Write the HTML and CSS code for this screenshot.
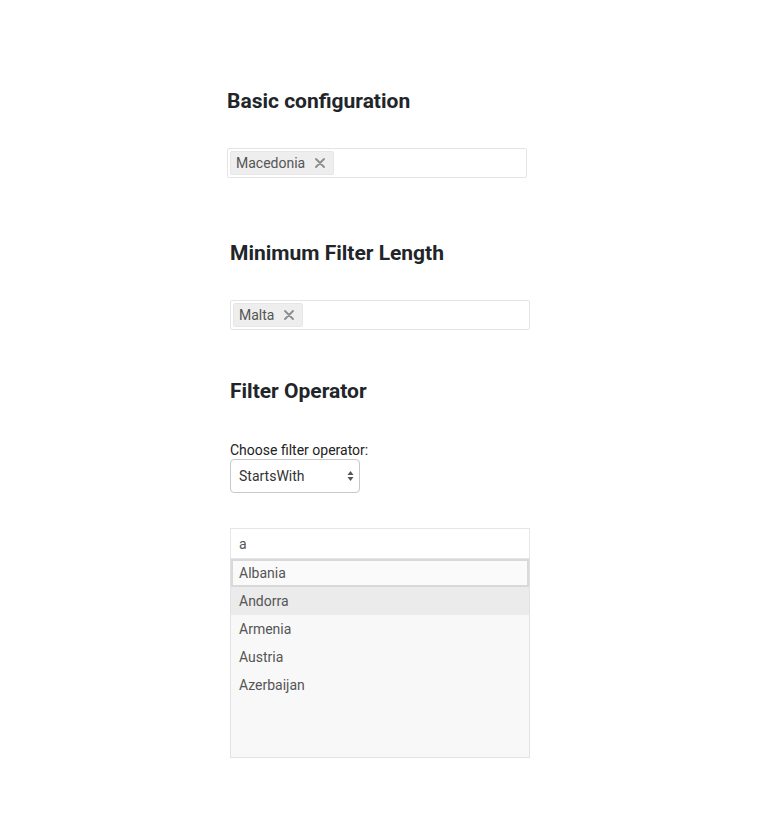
FILE: index.html
```html
<!DOCTYPE html>
<html>
<head>
<meta charset="utf-8">
<link rel="stylesheet" href="styles.css">
</head>
<body>
<div class="page">
  <section class="demo demo-first">
    <h2 class="title">Basic configuration</h2>
    <div class="multi">
      <span class="tag">Macedonia <svg class="tag-x" width="10" height="10" viewBox="0 0 10 10"><path d="M1 1 L9 9 M9 1 L1 9" stroke="#8c8c8c" stroke-width="1.8" stroke-linecap="round"/></svg></span>
    </div>
  </section>

  <section class="demo demo-second">
    <h2 class="title">Minimum Filter Length</h2>
    <div class="multi">
      <span class="tag">Malta <svg class="tag-x" width="10" height="10" viewBox="0 0 10 10"><path d="M1 1 L9 9 M9 1 L1 9" stroke="#8c8c8c" stroke-width="1.8" stroke-linecap="round"/></svg></span>
    </div>
  </section>

  <section class="demo demo-third">
    <h2 class="title">Filter Operator</h2>
    <label class="label">Choose filter operator:</label>
    <div class="select">
      <span>StartsWith</span>
      <svg class="select-arrows" width="7" height="12" viewBox="0 0 7 12"><path d="M3.5 1 L6.5 5 L0.5 5 Z M3.5 11 L6.5 7 L0.5 7 Z" fill="#555"/></svg>
    </div>
    <div class="combo">
      <div class="search">a</div>
      <ul class="list">
        <li class="item item-focus">Albania</li>
        <li class="item item-hover">Andorra</li>
        <li class="item">Armenia</li>
        <li class="item">Austria</li>
        <li class="item">Azerbaijan</li>
      </ul>
    </div>
  </section>
</div>
</body>
</html>
```

FILE: styles.css
```css
* { box-sizing: border-box; }
html, body { margin: 0; padding: 0; background: #fff; }
body {
  font-family: Roboto, "Liberation Sans", sans-serif;
  color: #212529;
}
.page {
  padding-top: 88px;
  padding-left: 230px;
  width: 770px;
}
.demo { width: 300px; }
.demo-first { margin-left: -3px; }
.demo-second { margin-top: 62px; }
.demo-third { margin-top: 48px; }
.title {
  margin: 0;
  padding-top: 1px;
  font-size: 21px;
  line-height: 25px;
  font-weight: 700;
  color: #212529;
}
.multi {
  margin-top: 34px;
  height: 30px;
  border: 1px solid #e4e4e4;
  border-radius: 2px;
  padding: 2px;
  display: flex;
  align-items: flex-start;
}
.tag {
  display: inline-flex;
  align-items: center;
  height: 24px;
  padding: 0 8px 0 5px;
  background: #eeeeee;
  border: 1px solid #e6e6e6;
  border-radius: 2px;
  font-size: 14px;
  color: #555;
  gap: 10px;
}
.tag-x { display: block; }
.label {
  display: block;
  margin-top: 38px;
  font-size: 14px;
  line-height: 16px;
  color: #222;
}
.select {
  margin-top: 1px;
  width: 130px;
  height: 34px;
  border: 1px solid #c8c8c8;
  border-radius: 4px;
  display: flex;
  align-items: center;
  justify-content: space-between;
  padding: 0 5px 0 8px;
  font-size: 14px;
  color: #333;
  background: #fff;
}
.select-arrows { display: block; }
.combo { margin-top: 35px; }
.search {
  height: 30px;
  border: 1px solid #e6e6e6;
  border-bottom: none;
  padding: 0 8px;
  font-size: 14px;
  line-height: 30px;
  color: #555;
}
.list {
  list-style: none;
  margin: 0;
  padding: 0;
  height: 200px;
  background: #f8f8f8;
  border: 1px solid #e2e2e2;
  border-top: 1px solid #e6e6e6;
}
.item {
  height: 28px;
  line-height: 28px;
  padding: 0 8px;
  font-size: 14px;
  color: #555;
}
.item-focus {
  border: 2px solid #d9d9d9;
  line-height: 24px;
  padding: 0 6px;
  background: #fafafa;
}
.item-hover { background: #ebebeb; }
```
